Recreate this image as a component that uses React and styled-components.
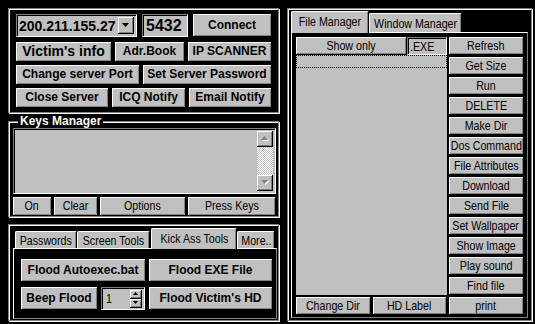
import styled, { createGlobalStyle } from "styled-components";

const SANS = `"Liberation Sans", Arial, sans-serif`;

const GlobalStyle = createGlobalStyle`
  html, body {
    margin: 0;
    padding: 0;
    background: #000;
  }
  * {
    box-sizing: border-box;
  }
`;

const Screen = styled.div`
  display: flex;
  gap: 8px;
  width: 535px;
  height: 324px;
  padding: 8px 0 0 8px;
  background: #000;
  overflow: hidden;
`;

const LeftColumn = styled.div`
  display: flex;
  flex-direction: column;
  width: 271px;
`;

const Group = styled.div`
  border: 1px solid #808080;
  box-shadow: inset 1px 1px #fff, 1px 1px #fff;
`;

const ConnectGroup = styled(Group)`
  display: flex;
  flex-direction: column;
  gap: 3px;
  height: 105px;
  padding: 5px 6px 0 7px;
`;

const Row = styled.div`
  display: flex;
  gap: ${(p) => p.$gap ?? 3}px;
  height: ${(p) => p.$h}px;
  margin-bottom: ${(p) => p.$mb ?? 0}px;
  margin-top: ${(p) => p.$mt ?? 0}px;
`;

// the old dialog uses a narrow face; Liberation Sans squeezed stands in for it
const Narrow = styled.span`
  display: inline-block;
  flex: none;
  font: 400 13px/1 ${SANS};
  transform: scaleX(0.82);
  transform-origin: ${(p) => (p.$left ? "left" : "center")};
  white-space: nowrap;
`;

const ButtonFace = styled.button`
  display: flex;
  align-items: center;
  justify-content: center;
  flex: ${(p) => (p.$w ? "none" : "1")};
  width: ${(p) => (p.$w ? `${p.$w}px` : "auto")};
  height: ${(p) => p.$h ?? "100%"};
  margin: 0;
  padding: 0 0 1px;
  background: #c0c0c0;
  border: none;
  border-right: 1px solid #000;
  border-bottom: 1px solid #000;
  box-shadow: inset 1px 1px #fff, inset -1px -1px #808080;
  color: #000;
  font-family: ${SANS};
  font-weight: 700;
  font-size: ${(p) => p.$size ?? 12}px;
  line-height: 1;
  white-space: nowrap;
  overflow: hidden;
`;

const Button = ({ children, $bold, ...rest }) => (
  <ButtonFace {...rest}>{$bold ? children : <Narrow>{children}</Narrow>}</ButtonFace>
);

const Sunken = styled.div`
  display: flex;
  align-items: center;
  background: #c0c0c0;
  border: 1px solid;
  border-color: #808080 #fff #fff #808080;
  box-shadow: inset 1px 1px #000, inset -1px -1px #c0c0c0;
  color: #000;
`;

const Combo = styled(Sunken)`
  width: 121px;
  padding: 2px 2px 2px 2px;
  font: 700 14px/1 ${SANS};
`;

const ComboText = styled.span`
  flex: 1;
  white-space: nowrap;
`;

const ArrowButton = styled.span`
  display: flex;
  align-items: center;
  justify-content: center;
  flex: none;
  width: ${(p) => p.$w ?? 16}px;
  height: ${(p) => p.$h ?? 17}px;
  background: #c0c0c0;
  border-right: 1px solid #000;
  border-bottom: 1px solid #000;
  box-shadow: inset 1px 1px #fff, inset -1px -1px #808080;
`;

const PortField = styled(Sunken)`
  width: 46px;
  padding-left: 3px;
  font: 700 16px/1 ${SANS};
`;

const TitledGroup = styled.fieldset`
  display: flex;
  flex-direction: column;
  min-width: 0;
  height: 103px;
  margin: 1px 0 0;
  padding: 0 2px 2px 4px;
  border: 1px solid #808080;
  box-shadow: inset 1px 1px #fff, 1px 1px #fff;
`;

const Legend = styled.legend`
  margin-left: 5px;
  padding: 0 2px;
  background: #000;
  color: #fff;
  font: 700 12px/14px ${SANS};
`;

const KeyLog = styled(Sunken)`
  justify-content: flex-end;
  align-items: stretch;
  height: 66px;
  padding: 2px;
`;

const ScrollBar = styled.div`
  display: flex;
  flex-direction: column;
  width: 16px;
`;

const ScrollTrack = styled.div`
  flex: 1;
  background: repeating-conic-gradient(#fff 0 25%, #c0c0c0 0 50%) 0 0 / 2px 2px;
`;

const FloodGroup = styled(Group)`
  display: flex;
  flex-direction: column;
  height: 97px;
  margin-top: 7px;
  padding: 3px 1px 1px 4px;
`;

const TabStrip = styled.div`
  display: flex;
  align-items: flex-end;
  height: ${(p) => p.$h}px;
  padding-left: ${(p) => p.$pl ?? 0}px;
  position: relative;
  z-index: 1;
`;

const TabFace = styled.div`
  display: flex;
  align-items: center;
  justify-content: center;
  flex: none;
  width: ${(p) => p.$w}px;
  height: ${(p) => (p.$active ? p.$h + 1 : p.$h - 3)}px;
  margin-bottom: ${(p) => (p.$active ? -1 : 0)}px;
  margin-left: ${(p) => p.$ml ?? 0}px;
  padding-bottom: ${(p) => (p.$active ? 2 : 0)}px;
  background: #c0c0c0;
  border-top: 1px solid #fff;
  border-left: 1px solid #fff;
  border-right: 1px solid #000;
  border-radius: 2px 2px 0 0;
  box-shadow: inset -1px 0 #808080;
  color: #000;
  overflow: hidden;
`;

const Tab = ({ children, ...rest }) => (
  <TabFace {...rest}>
    <Narrow>{children}</Narrow>
  </TabFace>
);

const TabPanel = styled.div`
  flex: 1;
  border: 1px solid;
  border-color: #fff #808080 #808080 #fff;
  padding: ${(p) => p.$pad};
`;

const FloodGrid = styled.div`
  display: grid;
  grid-template-columns: 125px 124px;
  grid-template-rows: 23px 23px;
  gap: 5px 3px;
`;

const SpinBox = styled(Sunken)`
  width: 44px;
  padding: 2px 2px 2px 4px;
`;

const SpinButtons = styled.div`
  display: flex;
  flex-direction: column;
  margin-left: auto;
`;

const FileGroup = styled(Group)`
  display: flex;
  flex-direction: column;
  width: 245px;
  height: 313px;
  padding: 2px 3px 2px 3px;
`;

const FileGrid = styled.div`
  display: grid;
  grid-template-columns: 1fr 75px;
  gap: 2px;
  height: 100%;
`;

const FileList = styled.div`
  display: flex;
  flex-direction: column;
`;

const ExtField = styled(Sunken)`
  width: 40px;
  padding-left: 2px;
  overflow: hidden;
`;

const ListBox = styled.div`
  flex: 1;
  margin-bottom: 2px;
  background: #c0c0c0;
`;

const FocusRow = styled.div`
  height: 13px;
  border: 1px dotted #000;
`;

const CommandColumn = styled.div`
  display: flex;
  flex-direction: column;
  gap: 2px;
`;

const Triangle = ({ down, muted, w = 7 }) => {
  const h = Math.ceil(w / 2);
  const pts = down ? `0,0 ${w},0 ${w / 2},${h}` : `0,${h} ${w},${h} ${w / 2},0`;
  return (
    <svg width={w + 1} height={h + 1} viewBox={`0 0 ${w + 1} ${h + 1}`}>
      {muted && <polygon points={pts} fill="#fff" transform="translate(1,1)" />}
      <polygon points={pts} fill={muted ? "#808080" : "#000"} />
    </svg>
  );
};

const commands = [
  "Refresh",
  "Get Size",
  "Run",
  "DELETE",
  "Make Dir",
  "Dos Command",
  "File Attributes",
  "Download",
  "Send File",
  "Set Wallpaper",
  "Show Image",
  "Play sound",
  "Find file",
  "print",
];

export default function App() {
  return (
    <Screen>
      <GlobalStyle />
      <LeftColumn>
        <ConnectGroup>
          <Row $h={23} $gap={5} $mb={2}>
            <Combo>
              <ComboText>200.211.155.27</ComboText>
              <ArrowButton>
                <Triangle down />
              </ArrowButton>
            </Combo>
            <PortField>5432</PortField>
            <Button $bold>Connect</Button>
          </Row>
          <Row $h={20}>
            <Button $bold $size={14} $w={96}>
              Victim's info
            </Button>
            <Button $bold $w={70}>
              Adr.Book
            </Button>
            <Button $bold>IP SCANNER</Button>
          </Row>
          <Row $h={20}>
            <Button $bold $w={124}>
              Change server Port
            </Button>
            <Button $bold>Set Server Password</Button>
          </Row>
          <Row $h={20}>
            <Button $bold $w={93}>
              Close Server
            </Button>
            <Button $bold $w={74}>
              ICQ Notify
            </Button>
            <Button $bold>Email Notify</Button>
          </Row>
        </ConnectGroup>

        <TitledGroup>
          <Legend>Keys Manager</Legend>
          <KeyLog>
            <ScrollBar>
              <ArrowButton $h={16}>
                <Triangle muted />
              </ArrowButton>
              <ScrollTrack />
              <ArrowButton $h={16}>
                <Triangle down muted />
              </ArrowButton>
            </ScrollBar>
          </KeyLog>
          <Row $h={19} $gap={2} $mt={3}>
            <Button $w={39}>On</Button>
            <Button $w={44}>Clear</Button>
            <Button $w={86}>Options</Button>
            <Button>Press Keys</Button>
          </Row>
        </TitledGroup>

        <FloodGroup>
          <TabStrip $h={20} $pl={2}>
            <Tab $w={62} $h={20}>
              Passwords
            </Tab>
            <Tab $w={73} $h={20}>
              Screen Tools
            </Tab>
            <Tab $w={86} $h={20} $ml={1} $active>
              Kick Ass Tools
            </Tab>
            <Tab $w={38} $h={20}>
              More..
            </Tab>
          </TabStrip>
          <TabPanel $pad="10px 0 0 7px">
            <FloodGrid>
              <Button $bold>Flood Autoexec.bat</Button>
              <Button $bold>Flood EXE File</Button>
              <Row $h={23} $gap={3}>
                <Button $bold $w={77}>
                  Beep Flood
                </Button>
                <SpinBox>
                  <Narrow $left>1</Narrow>
                  <SpinButtons>
                    <ArrowButton $w={12} $h={9}>
                      <Triangle w={5} />
                    </ArrowButton>
                    <ArrowButton $w={12} $h={9}>
                      <Triangle w={5} down />
                    </ArrowButton>
                  </SpinButtons>
                </SpinBox>
              </Row>
              <Button $bold>Flood Victim's HD</Button>
            </FloodGrid>
          </TabPanel>
        </FloodGroup>
      </LeftColumn>

      <FileGroup>
        <TabStrip $h={21}>
          <Tab $w={78} $h={21} $active>
            File Manager
          </Tab>
          <Tab $w={93} $h={22}>
            Window Manager
          </Tab>
        </TabStrip>
        <TabPanel $pad="4px 3px 2px 4px">
          <FileGrid>
            <FileList>
              <Row $h={18} $gap={0}>
                <Button>Show only</Button>
                <ExtField>
                  <Narrow $left>.EXE</Narrow>
                </ExtField>
              </Row>
              <ListBox>
                <FocusRow />
              </ListBox>
              <Row $h={18} $gap={2}>
                <Button>Change Dir</Button>
                <Button>HD Label</Button>
              </Row>
            </FileList>
            <CommandColumn>
              {commands.map((c) => (
                <Button key={c} $w={75} $h="18px">
                  {c}
                </Button>
              ))}
            </CommandColumn>
          </FileGrid>
        </TabPanel>
      </FileGroup>
    </Screen>
  );
}
